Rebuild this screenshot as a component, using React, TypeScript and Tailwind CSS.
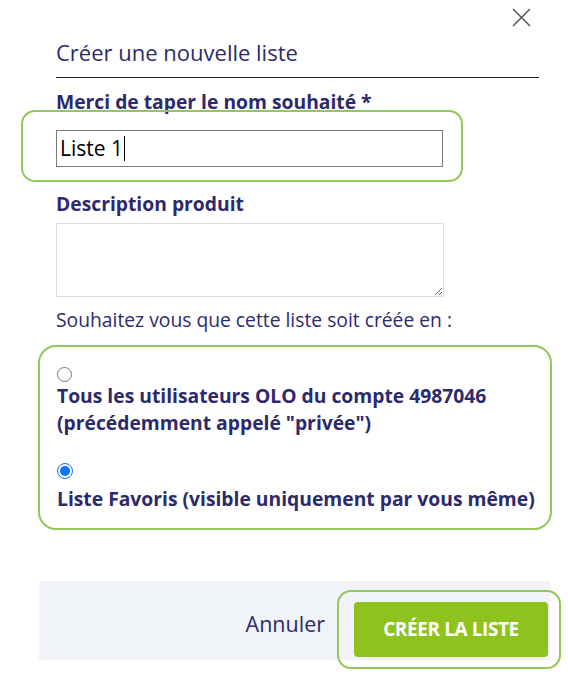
import React from "react";

const navy = "text-[#2d2a6c]";

export default function App() {
  return (
    <div className="w-[568px] h-[688px] bg-white overflow-hidden font-['Open_Sans',sans-serif]">
      <div className="flex justify-end pt-[8px] pr-[37px]">
        <svg width="19" height="19" viewBox="0 0 19 19" className="block">
          <path d="M1 1 L18 18 M18 1 L1 18" stroke="#5a5a5a" strokeWidth="1.6" fill="none" />
        </svg>
      </div>
      <div className="pl-[56px] w-[539px] flex flex-col">
        <h1 className={`mt-[10px] text-[22px] leading-[30px] font-normal ${navy}`}>Créer une nouvelle liste</h1>
        <div className="mt-[10px] h-px bg-[#222222]" />
        <div className={`mt-[11px] text-[19.3px] leading-[26px] font-bold whitespace-nowrap ${navy}`}>Merci de taper le nom souhaité *</div>
        <div className="-mt-[5px] -ml-[35px] w-[442px] border-2 border-[#94c65a] rounded-[14px] pl-[33px] pt-[18px] pb-[13px]">
          <div className="w-[387px] h-[37px] border border-[#7a7a7a] flex items-center pl-[3px] text-[21px] text-black">
            <span>Liste 1</span>
            <span className="ml-[1px] w-px h-[25px] bg-black" />
          </div>
        </div>
        <div className={`mt-[9px] text-[19.3px] leading-[26px] font-bold ${navy}`}>Description produit</div>
        <textarea className="mt-[6px] block w-[388px] h-[74px] border border-[#dcdcdc] resize outline-none" />
        <div className={`mt-[10px] text-[19.3px] leading-[26px] whitespace-nowrap ${navy}`}>Souhaitez vous que cette liste soit créée en :</div>
        <div className="mt-[12px] -ml-[18px] w-[514px] border-2 border-[#94c65a] rounded-[18px] pl-[17px] pt-[20px] pb-[16px]">
          <div className="w-[15px] h-[15px] rounded-full border border-[#767676] bg-white" />
          <div className={`text-[19.3px] leading-[27px] font-bold whitespace-nowrap ${navy}`}>
            Tous les utilisateurs OLO du compte 4987046
            <br />
            (précédemment appelé "privée")
          </div>
          <div className="mt-[27px] w-[16px] h-[16px] rounded-full border-[1.5px] border-[#0b74ff] bg-white flex items-center justify-center">
            <div className="w-[10px] h-[10px] rounded-full bg-[#0b74ff]" />
          </div>
          <div className={`mt-[6px] text-[19.3px] leading-[27px] font-bold whitespace-nowrap ${navy}`}>
            Liste Favoris (visible uniquement par vous même)
          </div>
        </div>
        <div className="mt-[51px] -ml-[17px] w-[511px] h-[79px] bg-[#f0f3f8] flex justify-end items-start pt-[21px] pr-[2px]">
          <span className={`mt-[8px] mr-[29px] text-[21.5px] leading-[28px] ${navy}`}>Annuler</span>
          <div className="relative">
            <div className="absolute -left-[17px] -right-[13px] -top-[12px] -bottom-[12px] border-2 border-[#94c65a] rounded-[14px]" />
            <button className="relative w-[194px] h-[55px] bg-[#8dc21f] rounded-[4px] text-white text-[19px] font-bold tracking-[-0.4px]">
              CRÉER LA LISTE
            </button>
          </div>
        </div>
      </div>
    </div>
  );
}
